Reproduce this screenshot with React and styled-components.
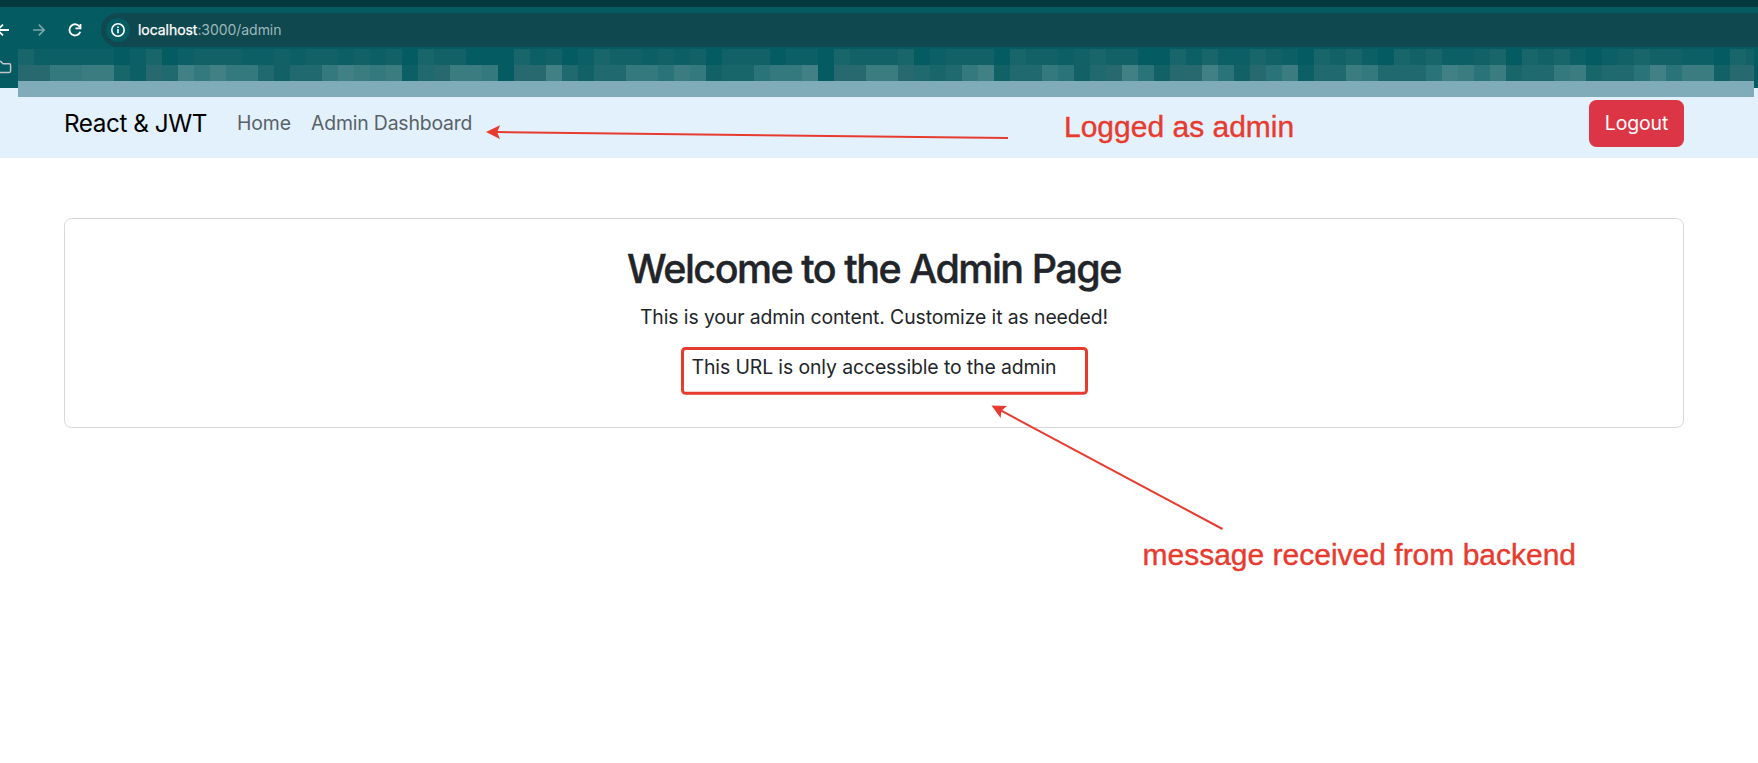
import React from 'react';
import styled, { createGlobalStyle } from 'styled-components';

const GlobalStyle = createGlobalStyle`
  * { box-sizing: border-box; }
  html, body { margin: 0; padding: 0; }
  body {
    background: #fff;
    color: #212529;
    font-family: Inter, 'Liberation Sans', sans-serif;
    font-size: 19.4px;
    line-height: 30px;
    overflow: hidden;
  }
`;

const Screen = styled.div`
  position: relative;
  width: 1758px;
  height: 763px;
  overflow: hidden;
`;

/* Browser chrome */
const Chrome = styled.header`
  height: 88px;
  background: #045b62;
  border-top: 7px solid #04393e;
`;

const Toolbar = styled.div`
  display: flex;
  align-items: center;
  height: 46px;
`;

const NavIcons = styled.div`
  display: flex;
  flex: none;
  width: 101px;
`;

const AddressBar = styled.div`
  flex: 1;
  display: flex;
  align-items: center;
  height: 34px;
  padding-left: 5px;
  border-radius: 17px 0 0 17px;
  background: #10484f;
  color: #9db8bb;
  font-size: 14px;
  line-height: 20px;
  letter-spacing: -0.05px;
`;

const SiteInfo = styled.span`
  display: flex;
  width: 24px;
  height: 24px;
  margin-right: 8px;
  border-radius: 50%;
  background: #045b62;
`;

const Host = styled.span`
  color: #fff;
  -webkit-text-stroke: 0.25px #fff;
`;

const BookmarksBar = styled.div`
  height: 35px;
`;

const Mosaic = styled.div`
  position: absolute;
  z-index: 1;
  left: 17.5px;
  top: 48.5px;
  width: 1736.3px;
  overflow: hidden;
  border-bottom: 16px solid #7facb8;
`;

const MosaicRow = styled.div`
  display: flex;
  height: 16px;
`;

const TILE_COLORS = [
  '#045b62', '#0b5f65', '#116167', '#18656a', '#206a6f',
  '#27696f', '#2a7378', '#34797d', '#3a7c80', '#418085',
];

const Tile = styled.i`
  flex: none;
  width: 16px;
  background: ${({ $level }) => TILE_COLORS[$level]};
`;

/* Application */
const Navbar = styled.nav`
  display: flex;
  align-items: center;
  height: 70px;
  padding: 0 74px 0 64px;
  background: #e3f1fd;
`;

const Brand = styled.span`
  margin: 0 30px 0 0;
  width: 143px;
  color: #000;
  font-size: 24.3px;
  letter-spacing: -0.45px;
  white-space: nowrap;
`;

const NavLink = styled.span`
  width: ${({ $width }) => $width}px;
  margin-right: 20px;
  color: #596167;
  letter-spacing: ${({ $spacing }) => $spacing}px;
  white-space: nowrap;
`;

const LogoutButton = styled.button`
  width: 95px;
  height: 47px;
  margin-left: auto;
  padding: 0;
  border: 0;
  border-radius: 7.5px;
  background: #dc3545;
  color: #fff;
  font: inherit;
  letter-spacing: -0.1px;
`;

const Card = styled.main`
  height: 210px;
  margin: 60px 74px 0 64px;
  padding: 26px 0 0;
  border: 1px solid #d7d8d9;
  border-radius: 7.5px;
  text-align: center;
`;

const Title = styled.h1`
  margin: 0 0 9px;
  font-size: 39.5px;
  font-weight: 500;
  line-height: 48px;
  letter-spacing: -1.5px;
  -webkit-text-stroke: 0.4px #212529;
`;

const Paragraph = styled.p`
  margin: 0 0 20px;
  letter-spacing: -0.1px;
`;

/* Red mark-up drawn over the page */
const Marks = styled.svg`
  position: absolute;
  z-index: 2;
  left: 0;
  top: 0;
  pointer-events: none;
`;

const Note = styled.span`
  position: absolute;
  z-index: 2;
  left: ${({ $x }) => $x}px;
  top: ${({ $y }) => $y}px;
  color: #e73b2f;
  font-family: 'Liberation Sans', Arial, sans-serif;
  font-size: 30px;
  line-height: 36px;
  white-space: nowrap;
  -webkit-text-stroke: 0.4px #e73b2f;
`;

/* Brightness level of each tile, left to right */
const TILE_ROWS = [
  '311111013012221121221212032' +
    '200031201322121202220110322' +
    '230122203221232200313113210' +
    '3231032311230323101232211032',
  '557788315497977424479878145' +
    '887055942447768723367790558' +
    '854347924476245962559625681' +
    '4487444698683447834469688255',
];

function Arrow({ x1, y1, x2, y2 }) {
  const angle = (Math.atan2(y2 - y1, x2 - x1) * 180) / Math.PI;
  const length = Math.hypot(x2 - x1, y2 - y1);
  return (
    <g transform={`translate(${x1} ${y1}) rotate(${angle})`}>
      <path d={`M10 0H${length}`} stroke="#e73b2f" strokeWidth="2" />
      <path d="M0 0L14 -6.8L11.2 0L14 6.8Z" fill="#e73b2f" />
    </g>
  );
}

export default function App() {
  return (
    <Screen>
      <GlobalStyle />
      <Chrome>
        <Toolbar>
          <NavIcons>
            <svg width="101" height="46" viewBox="0 7 101 46" fill="none">
              <path d="M9 30H-2M3 24.6L-2.4 30L3 35.4" stroke="#fff" strokeWidth="1.8" />
              <path d="M33 30H44M38.8 24.6L44.2 30L38.8 35.4" stroke="#7fa6aa" strokeWidth="1.6" />
              <path d="M80 27.3A5.6 5.6 0 1 0 80.3 31.8" stroke="#fff" strokeWidth="1.9" />
              <path d="M80.5 24V28.4H75.5" stroke="#fff" strokeWidth="1.8" />
            </svg>
          </NavIcons>
          <AddressBar>
            <SiteInfo>
              <svg width="24" height="24" viewBox="0 0 24 24" fill="none">
                <circle cx="12" cy="12" r="6.2" stroke="#fff" strokeWidth="1.6" />
                <path d="M12 11V15.2M12 8.5V10" stroke="#fff" strokeWidth="1.6" />
              </svg>
            </SiteInfo>
            <Host>localhost</Host>:3000/admin
          </AddressBar>
        </Toolbar>
        <BookmarksBar>
          <svg width="17" height="35" viewBox="0 53 17 35" fill="none">
            <path d="M-3 61.5H0.8L3 63.8H9.2Q10.6 63.8 10.6 65.2V71Q10.6 72.4 9.2 72.4H-3" stroke="#c3c6c7" strokeWidth="1.5" />
          </svg>
        </BookmarksBar>
      </Chrome>

      <Mosaic>
        {TILE_ROWS.map((row, index) => (
          <MosaicRow key={index}>
            {row.split('').map((level, column) => (
              <Tile key={column} $level={Number(level)} />
            ))}
          </MosaicRow>
        ))}
      </Mosaic>

      <Navbar>
        <Brand>React &amp; JWT</Brand>
        <NavLink $width={54} $spacing={-0.1}>Home</NavLink>
        <NavLink $width={162} $spacing={-0.17}>Admin Dashboard</NavLink>
        <LogoutButton>Logout</LogoutButton>
      </Navbar>

      <Card>
        <Title>Welcome to the Admin Page</Title>
        <Paragraph>This is your admin content. Customize it as needed!</Paragraph>
        <Paragraph>This URL is only accessible to the admin</Paragraph>
      </Card>

      <Marks width="1758" height="763" fill="none">
        <Arrow x1={486} y1={132} x2={1008} y2={138} />
        <Arrow x1={991.5} y1={405.5} x2={1222.5} y2={529} />
        <rect x="682.5" y="348.5" width="404" height="44.8" rx="3" stroke="#e73b2f" strokeWidth="3" />
      </Marks>
      <Note $x={1064} $y={109}>Logged as admin</Note>
      <Note $x={1142.5} $y={536.5}>message received from backend</Note>
    </Screen>
  );
}
